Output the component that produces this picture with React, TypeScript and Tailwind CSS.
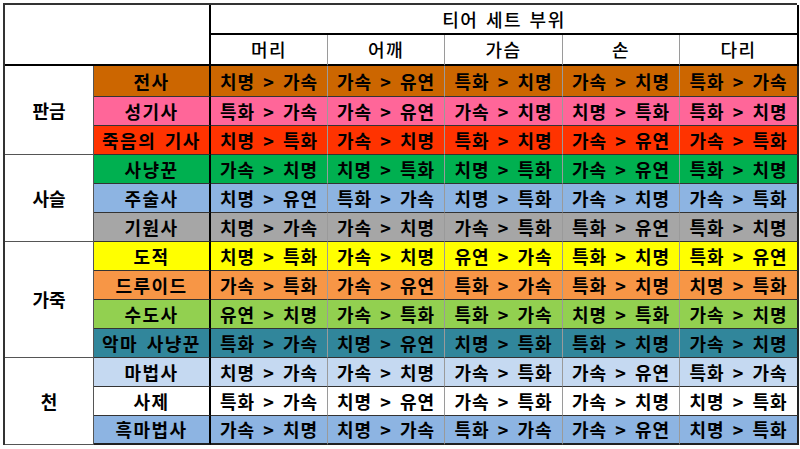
const parts = ["머리", "어깨", "가슴", "손", "다리"];

type Row = { name: string; bg: string; cells: string[] };

const groups: { label: string; rows: Row[] }[] = [
  {
    label: "판금",
    rows: [
      { name: "전사", bg: "bg-[#cc6600]", cells: ["치명 > 가속", "가속 > 유연", "특화 > 치명", "가속 > 치명", "특화 > 가속"] },
      { name: "성기사", bg: "bg-[#ff6699]", cells: ["특화 > 가속", "가속 > 유연", "가속 > 치명", "치명 > 특화", "특화 > 치명"] },
      { name: "죽음의 기사", bg: "bg-[#ff3300]", cells: ["치명 > 특화", "가속 > 치명", "특화 > 치명", "가속 > 유연", "가속 > 특화"] },
    ],
  },
  {
    label: "사슬",
    rows: [
      { name: "사냥꾼", bg: "bg-[#00b050]", cells: ["가속 > 치명", "치명 > 특화", "치명 > 특화", "가속 > 유연", "특화 > 치명"] },
      { name: "주술사", bg: "bg-[#8db4e2]", cells: ["치명 > 유연", "특화 > 가속", "치명 > 특화", "가속 > 치명", "가속 > 특화"] },
      { name: "기원사", bg: "bg-[#a6a6a6]", cells: ["치명 > 가속", "가속 > 치명", "가속 > 특화", "특화 > 유연", "특화 > 치명"] },
    ],
  },
  {
    label: "가죽",
    rows: [
      { name: "도적", bg: "bg-[#ffff00]", cells: ["치명 > 특화", "가속 > 치명", "유연 > 가속", "특화 > 치명", "특화 > 유연"] },
      { name: "드루이드", bg: "bg-[#f79646]", cells: ["가속 > 특화", "가속 > 유연", "특화 > 가속", "특화 > 치명", "치명 > 특화"] },
      { name: "수도사", bg: "bg-[#92d050]", cells: ["유연 > 치명", "가속 > 특화", "특화 > 가속", "치명 > 특화", "가속 > 치명"] },
      { name: "악마 사냥꾼", bg: "bg-[#31869b]", cells: ["특화 > 가속", "치명 > 유연", "치명 > 특화", "특화 > 치명", "가속 > 치명"] },
    ],
  },
  {
    label: "천",
    rows: [
      { name: "마법사", bg: "bg-[#c5d9f1]", cells: ["치명 > 가속", "가속 > 치명", "가속 > 특화", "가속 > 유연", "특화 > 가속"] },
      { name: "사제", bg: "bg-white", cells: ["특화 > 가속", "치명 > 유연", "가속 > 특화", "가속 > 치명", "치명 > 특화"] },
      { name: "흑마법사", bg: "bg-[#8db4e2]", cells: ["가속 > 치명", "치명 > 가속", "특화 > 가속", "가속 > 유연", "치명 > 특화"] },
    ],
  },
];

export default function App() {
  let rowIndex = 0;
  return (
    <div
      className="w-[800px] h-[449px] bg-white overflow-hidden pt-[3px] pl-[3px]"
      style={{ fontFamily: '"Noto Sans CJK KR", "Noto Sans", sans-serif' }}
    >
      <div className="grid w-[794px] grid-cols-[89px_117px_117px_117px_118px_117px_119px] border-t-2 border-l-2 border-[#333] text-black">
        {/* header */}
        <div className="col-span-2 row-span-2 border-r-2 border-b-2 border-black h-[61px]" />
        <div className="col-span-5 h-[30px] flex items-center justify-center border-b-2 border-r-2 border-black text-[18px] font-medium tracking-[1.5px] [word-spacing:2px]">
          티어 세트 부위
        </div>
        {parts.map((p, i) => (
          <div
            key={p}
            className={`h-[31px] flex items-center justify-center border-b-2 border-black text-[18px] font-medium tracking-[1.5px] ${
              i === 4 ? "border-r-2 border-r-black" : "border-r border-r-[#9a9a9a]"
            }`}
          >
            {p}
          </div>
        ))}

        {groups.map((g) => (
          <div key={g.label} className="contents">
            <div
              className="flex items-center justify-center border-r border-b border-[#555] font-bold text-[18px] bg-white"
              style={{ gridRow: `span ${g.rows.length}` }}
            >
              {g.label}
            </div>
            {g.rows.map((r) => {
              const idx = rowIndex++;
              const h = idx === 0 ? "h-[31px]" : "h-[29px]";
              const last = idx === 12;
              const bb = last ? "border-b-2 border-b-[#222]" : "border-b border-b-[#333]";
              return (
                <div key={r.name} className="contents">
                  <div
                    className={`${h} ${r.bg} ${bb} border-r-2 border-r-black flex items-center justify-center font-bold text-[18px] tracking-[1.5px] [word-spacing:3px]`}
                  >
                    {r.name}
                  </div>
                  {r.cells.map((c, ci) => (
                    <div
                      key={ci}
                      className={`${h} ${r.bg} ${bb} flex items-center justify-center font-bold text-[18px] whitespace-pre tracking-[1px] [word-spacing:3px] ${
                        ci === 4 ? "border-r-2 border-r-[#222]" : "border-r border-r-[#9a9a9a]"
                      }`}
                    >
                      {c}
                    </div>
                  ))}
                </div>
              );
            })}
          </div>
        ))}
      </div>
    </div>
  );
}
